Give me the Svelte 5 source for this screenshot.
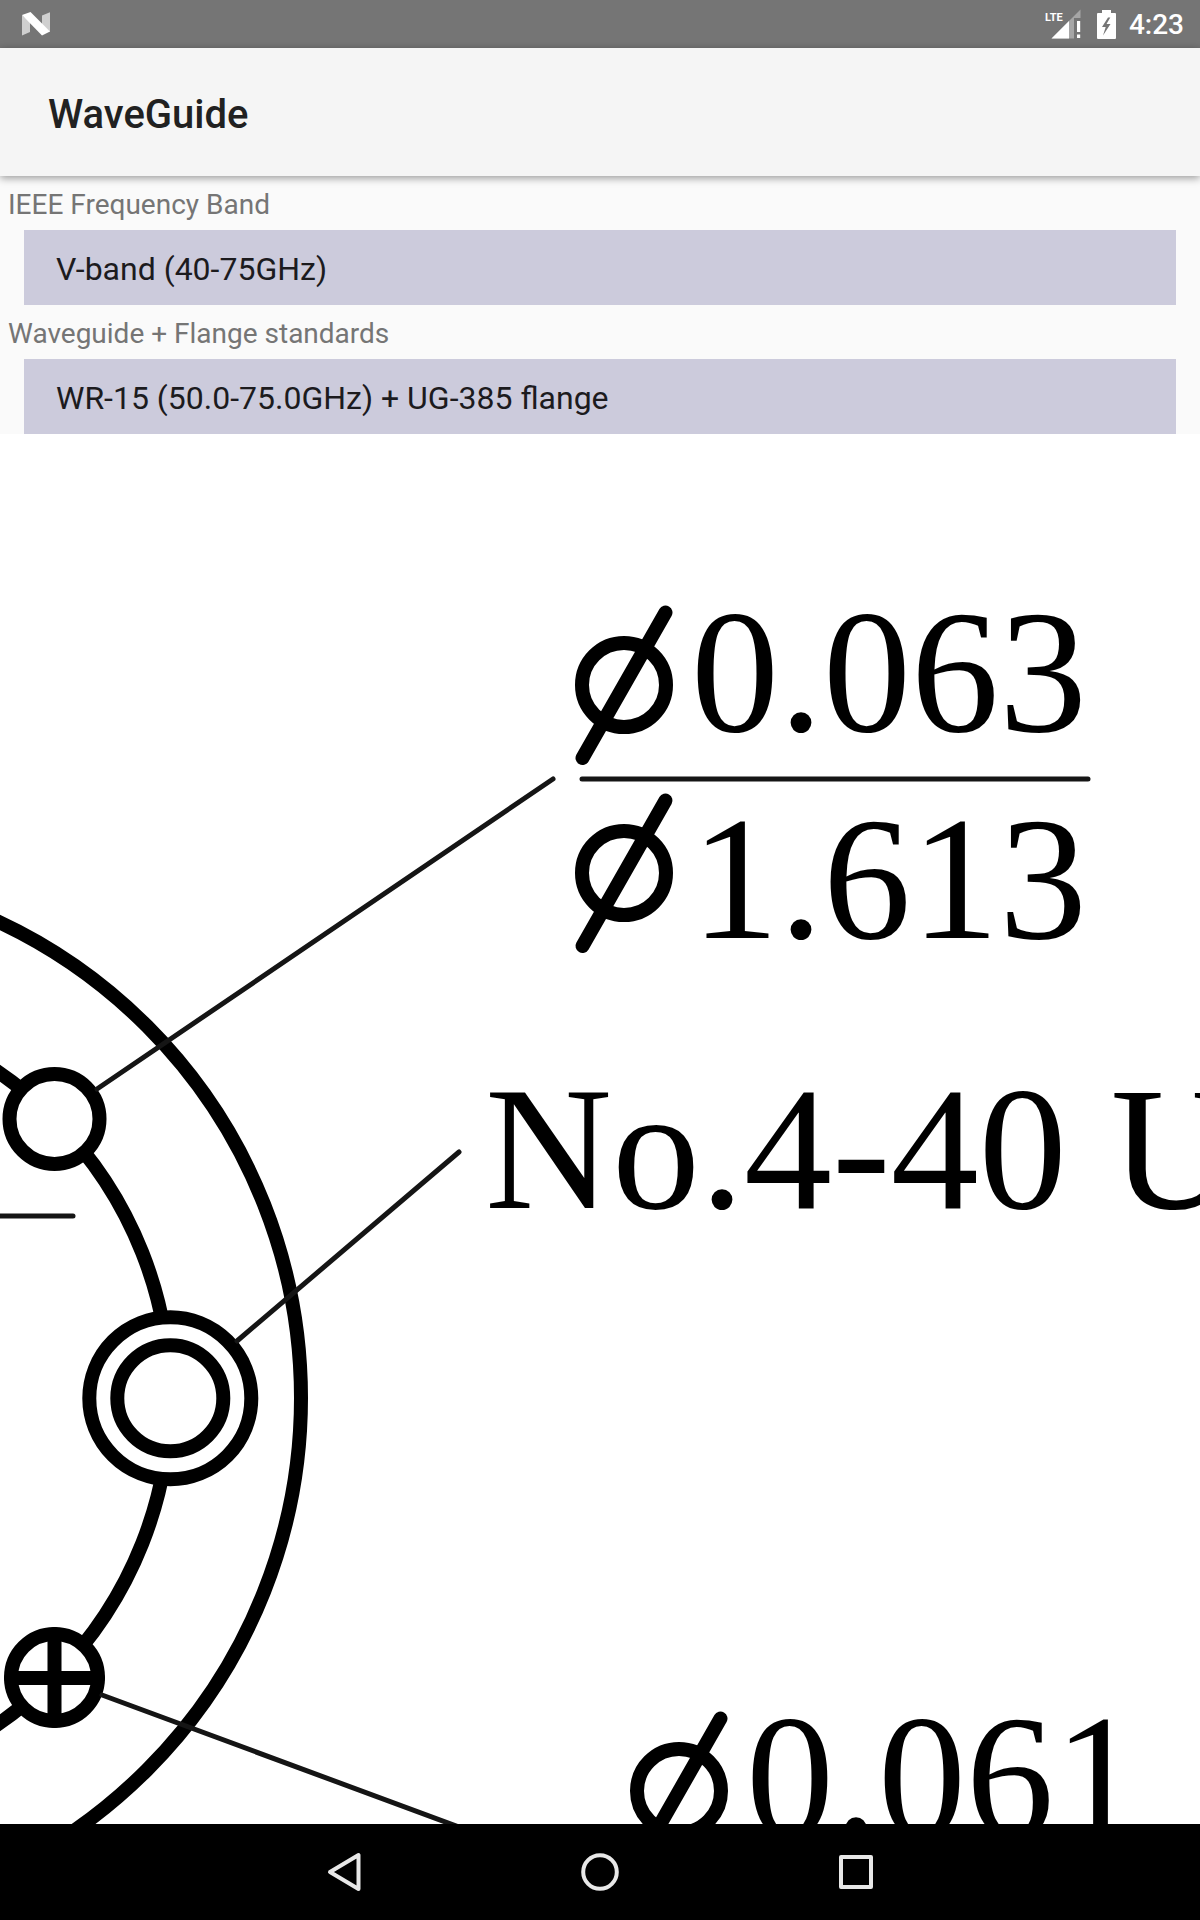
<script>
  let band = $state('V-band (40-75GHz)');
  let standard = $state('WR-15 (50.0-75.0GHz) + UG-385 flange');

  // Diameter symbols: centre of each ring on the drawing sheet
  const diameters = [
    { x: 624, y: 685 },
    { x: 624, y: 873 },
    { x: 679, y: 1791 }
  ];
</script>

<div class="screen">
  <div class="status">
    <svg class="notice" width="28" height="24" viewBox="0 0 28 24" aria-hidden="true">
      <path d="M0 3v20.500l8-3.500V10z" fill="#cfcfcf" />
      <path d="M20 3.500l8-3.200V20l-8-7z" fill="#cfcfcf" />
      <path d="M0 3L8.500 0 28 19.500 20 23.500z" fill="#fff" />
    </svg>
    <div class="indicators">
      <svg width="36" height="30" viewBox="0 0 36 30" aria-label="LTE signal">
        <path d="M35.500 .5V9H29v20.500H6.500z" fill="#a6a6a6" />
        <path d="M24 12v17.500H6.500z" fill="#fff" />
        <path d="M32 12h3.200v11H32zM32 25.500h3.200V29H32z" fill="#fff" />
        <text class="network" x="0" y="12">LTE</text>
      </svg>
      <svg class="battery" width="19" height="29" viewBox="0 0 19 29" aria-label="Battery charging">
        <path d="M5 0h9v3h4q1 0 1 1v24q0 1-1 1H1q-1 0-1-1V4q0-1 1-1h4z" fill="#fff" />
        <path d="M11 7.500L5 17h3.700l-2.700 8.500L13.500 14H9.500l3.800-6.500z" fill="#757575" />
      </svg>
      <time>4:23</time>
    </div>
  </div>

  <header>
    <h1>WaveGuide</h1>
  </header>

  <form>
    <label for="band">IEEE Frequency Band</label>
    <select id="band" bind:value={band}>
      <option>V-band (40-75GHz)</option>
    </select>
    <label for="standard">Waveguide + Flange standards</label>
    <select id="standard" bind:value={standard}>
      <option>WR-15 (50.0-75.0GHz) + UG-385 flange</option>
    </select>
  </form>

  <main>
    <svg class="sheet" viewBox="0 434 1200 1390" preserveAspectRatio="xMidYMid slice">
      <g class="heavy">
        <circle cx="-225" cy="1398" r="526" />
        <circle cx="-225" cy="1398" r="395" />
        <circle class="hole" cx="54.500" cy="1119" r="45" />
        <circle class="hole" cx="170.300" cy="1398.300" r="81" />
        <circle cx="170.300" cy="1398.300" r="53" />
        <circle class="hole" cx="54.500" cy="1677.500" r="43.500" />
        <path d="M11 1678H98M54.500 1634V1721" />
        {#each diameters as d}
          <circle cx={d.x} cy={d.y} r="42" />
          <path d="M{d.x - 41.500} {d.y + 73}L{d.x + 41.500} {d.y - 72.500}" />
        {/each}
      </g>
      <g class="leader">
        <path d="M97 1089L553 779" />
        <path d="M237 1341L459 1152" />
        <path d="M102 1695L540 1857" />
        <path d="M-10 1216H73" />
        <path d="M582 779H1088" />
      </g>
      <g class="dimension">
        <text x="691" y="731">0.063</text>
        <text x="691" y="938">1.613</text>
        <text x="485" y="1208">No.4-40 U</text>
        <text x="746" y="1836">0.061</text>
      </g>
    </svg>
  </main>

  <nav>
    <button type="button" aria-label="Back">
      <svg width="40" height="40" viewBox="0 0 40 40"><path d="M34.500 3v34L6 20z" /></svg>
    </button>
    <button type="button" aria-label="Home">
      <svg width="40" height="40" viewBox="0 0 40 40"><circle cx="20" cy="20" r="16.800" /></svg>
    </button>
    <button type="button" aria-label="Recent apps">
      <svg width="40" height="40" viewBox="0 0 40 40"><rect x="5" y="5" width="30" height="30" /></svg>
    </button>
  </nav>
</div>

<style>
  :global(body) {
    margin: 0;
  }
  .screen {
    display: flex;
    flex-direction: column;
    height: 100vh;
    background: #fafafa;
    font-family: Roboto, sans-serif;
    overflow: hidden;
  }
  .status {
    display: flex;
    flex: none;
    align-items: center;
    justify-content: space-between;
    height: 48px;
    padding: 0 16px 0 22px;
    background: #757575;
    color: #fff;
  }
  .indicators {
    display: flex;
    align-items: center;
  }
  .battery {
    margin: 0 13px 0 16px;
  }
  .network {
    font: 700 11px Roboto, sans-serif;
    fill: #fff;
  }
  time {
    font-size: 28px;
    font-weight: 500;
    line-height: 48px;
    padding-top: 2px;
  }
  header {
    position: relative;
    flex: none;
    padding: 0 48px;
    background: #f5f5f5;
    box-shadow: 0 2px 8px rgba(0, 0, 0, 0.4);
  }
  h1 {
    margin: 0;
    padding-top: 6px;
    color: #212121;
    font-size: 40px;
    font-weight: 500;
    line-height: 122px;
  }
  form {
    display: flex;
    flex: none;
    flex-direction: column;
  }
  label {
    padding: 4px 8px 0;
    color: #757575;
    font-size: 28px;
    line-height: 50px;
  }
  select {
    appearance: none;
    box-sizing: border-box;
    height: 75px;
    margin: 0 24px;
    padding: 3px 32px 0;
    border: 0;
    border-radius: 0;
    background: #cccbdc;
    color: #1c1b1e;
    font: 32px Roboto, sans-serif;
  }
  main {
    flex: 1;
    min-height: 0;
    background: #fff;
  }
  .sheet {
    display: block;
    width: 100%;
    height: 100%;
  }
  .heavy {
    fill: none;
    stroke: #000;
    stroke-width: 14px;
    stroke-linecap: round;
  }
  .hole {
    fill: #fff;
  }
  .leader {
    stroke: #151515;
    stroke-width: 5px;
    stroke-linecap: round;
  }
  .dimension {
    font: 176px "Liberation Serif", serif;
  }
  nav {
    display: flex;
    flex: none;
    justify-content: center;
    height: 96px;
    background: #000;
  }
  button {
    display: flex;
    flex: 0 1 256px;
    align-items: center;
    justify-content: center;
    padding: 0;
    border: 0;
    background: none;
  }
  button svg {
    fill: none;
    stroke: #e8e8e8;
    stroke-width: 4px;
    stroke-linejoin: round;
  }
</style>
